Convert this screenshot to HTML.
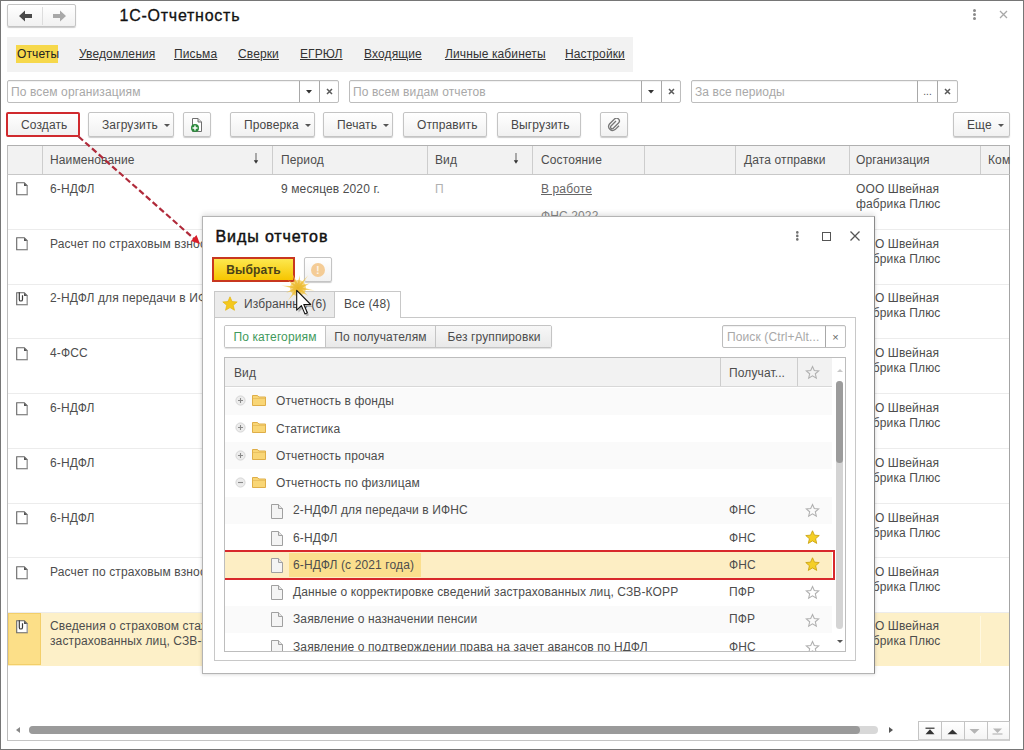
<!DOCTYPE html>
<html><head><meta charset="utf-8">
<style>
*{box-sizing:border-box}
html,body{margin:0;padding:0;width:1024px;height:750px;overflow:hidden;background:#fff}
body{position:relative;font-family:"Liberation Sans",sans-serif;font-size:12px;letter-spacing:0.12px;color:#4d4d4d}
.a{position:absolute}
.t{position:absolute;white-space:nowrap;line-height:16px}
.frame{left:0;top:0;width:1024px;height:750px;border:1px solid #767676;z-index:50;pointer-events:none}
.btn{position:absolute;border:1px solid #c4c4c4;border-radius:2px;background:linear-gradient(#fff,#f1f1f1);box-shadow:0 1px 1px rgba(0,0,0,.2);display:flex;align-items:center;justify-content:center;color:#474747;white-space:nowrap}
.tb{justify-content:flex-start;padding-left:13px}
.dd{display:inline-block;width:0;height:0;border-left:3px solid transparent;border-right:3px solid transparent;border-top:3px solid #555;margin-left:6px;margin-top:1px}
.inp{position:absolute;border:1px solid #bdbdbd;border-radius:2px;background:#fff;box-shadow:inset 0 1px 1px rgba(0,0,0,.06)}
.ph{position:absolute;left:3px;top:3px;color:#a8a8a8;line-height:16px;white-space:nowrap}
.ib{position:absolute;top:0;bottom:0;border-left:1px solid #a8a8a8;display:flex;align-items:center;justify-content:center;color:#666}
.nav u{text-decoration:underline}
.hdr{position:absolute;left:7px;top:145px;width:1003px;height:30px;background:#f2f2f2;border-top:1px solid #b0b0b0;border-bottom:1px solid #c8c8c8;border-left:1px solid #bcbcbc;border-right:1px solid #a4a4a4}
.vs{position:absolute;width:1px;background:#cdcdcd}
.row{position:absolute;left:8px;width:1001px;border-bottom:1px solid #ececec}
.doc{position:absolute;width:11px;height:14px}
</style></head><body>
<div class="a frame"></div>

<!-- back/forward -->
<div class="btn" style="left:7px;top:4px;width:69px;height:23px;justify-content:flex-start">
  <div class="a" style="left:34px;top:2px;width:1px;height:18px;background:#ddd"></div>
  <svg class="a" style="left:10px;top:4px" width="16" height="14" viewBox="0 0 16 14"><path d="M1 7 L7 1.5 L7 5 L14 5 L14 9 L7 9 L7 12.5 Z" fill="#4a4a4a"/></svg>
  <svg class="a" style="left:43px;top:4px" width="16" height="14" viewBox="0 0 16 14"><path d="M15 7 L9 1.5 L9 5 L2 5 L2 9 L9 9 L9 12.5 Z" fill="#a8a8a8"/></svg>
</div>
<div class="t" style="left:119.5px;top:5px;font-size:16px;line-height:22px;letter-spacing:0.75px;-webkit-text-stroke:0.3px #111;color:#111">1С-Отчетность</div>
<div class="a" style="left:973px;top:9px;width:3px;height:3px;border-radius:50%;background:#8a8a8a"></div>
<div class="a" style="left:973px;top:13px;width:3px;height:3px;border-radius:50%;background:#8a8a8a"></div>
<div class="a" style="left:973px;top:17px;width:3px;height:3px;border-radius:50%;background:#8a8a8a"></div>
<svg class="a" style="left:999px;top:10px" width="9" height="9" viewBox="0 0 9 9"><path d="M1 1L8 8M8 1L1 8" stroke="#a8a8a8" stroke-width="1.3"/></svg>

<!-- nav bar -->
<div class="a nav" style="left:7px;top:37px;width:626px;height:35px;background:#f2f2f2"></div>
<div class="a" style="left:16px;top:45px;width:42px;height:18px;background:#f6d84b"></div>
<div class="t nav" style="left:17px;top:45.5px;color:#222">Отчеты</div>
<div class="t nav" style="left:79px;top:45.5px;color:#333"><u>Уведомления</u></div>
<div class="t nav" style="left:174px;top:45.5px;color:#333"><u>Письма</u></div>
<div class="t nav" style="left:238px;top:45.5px;color:#333"><u>Сверки</u></div>
<div class="t nav" style="left:300px;top:45.5px;color:#333"><u>ЕГРЮЛ</u></div>
<div class="t nav" style="left:364px;top:45.5px;color:#333"><u>Входящие</u></div>
<div class="t nav" style="left:445px;top:45.5px;color:#333"><u>Личные кабинеты</u></div>
<div class="t nav" style="left:565px;top:45.5px;color:#333"><u>Настройки</u></div>

<!-- filters -->
<div class="inp" style="left:7px;top:80px;width:332px;height:23px">
  <div class="ph">По всем организациям</div>
  <div class="ib" style="left:291px;width:20px;padding-right:1px"><svg width="6" height="4" viewBox="0 0 6 4"><path d="M0 0H6L3 3.5Z" fill="#333"/></svg></div>
  <div class="ib" style="left:311px;width:20px;padding-right:1px"><svg width="7" height="7" viewBox="0 0 7 7"><path d="M1 1L6 6M6 1L1 6" stroke="#5a5a5a" stroke-width="1.5"/></svg></div>
</div>
<div class="inp" style="left:349px;top:80px;width:332px;height:23px">
  <div class="ph">По всем видам отчетов</div>
  <div class="ib" style="left:291px;width:20px;padding-right:1px"><svg width="6" height="4" viewBox="0 0 6 4"><path d="M0 0H6L3 3.5Z" fill="#333"/></svg></div>
  <div class="ib" style="left:311px;width:20px;padding-right:1px"><svg width="7" height="7" viewBox="0 0 7 7"><path d="M1 1L6 6M6 1L1 6" stroke="#5a5a5a" stroke-width="1.5"/></svg></div>
</div>
<div class="inp" style="left:691px;top:80px;width:267px;height:23px">
  <div class="ph">За все периоды</div>
  <div class="ib" style="left:225px;width:20px;font-size:10px;align-items:flex-end;padding-bottom:5px;color:#555">...</div>
  <div class="ib" style="left:245px;width:20px"><svg width="7" height="7" viewBox="0 0 7 7"><path d="M1 1L6 6M6 1L1 6" stroke="#5a5a5a" stroke-width="1.5"/></svg></div>
</div>

<!-- toolbar -->
<div class="btn tb" style="left:6px;top:112px;width:74px;height:25px;border:2px solid #d02a2e;box-shadow:none;padding-left:13px">Создать</div>
<div class="btn tb" style="left:88px;top:112px;width:86px;height:25px">Загрузить<span class="dd"></span></div>
<div class="btn" style="left:183px;top:112px;width:28px;height:25px">
  <svg width="14" height="16" viewBox="0 0 14 16"><path d="M2.5 1.5h5.5l3.5 3.5v9.5H2.5z" fill="#fff" stroke="#6f6f6f"/><path d="M8 1.5V5h3.5" fill="#ddd" stroke="#6f6f6f"/><circle cx="5" cy="11" r="4" fill="#2c8a3c"/><path d="M5 8.5v5M2.5 11h5" stroke="#fff" stroke-width="1.4"/></svg>
</div>
<div class="btn tb" style="left:230px;top:112px;width:85px;height:25px">Проверка<span class="dd"></span></div>
<div class="btn tb" style="left:323px;top:112px;width:70px;height:25px">Печать<span class="dd"></span></div>
<div class="btn tb" style="left:403px;top:112px;width:84px;height:25px">Отправить</div>
<div class="btn tb" style="left:497px;top:112px;width:84px;height:25px">Выгрузить</div>
<div class="btn" style="left:600px;top:112px;width:28px;height:25px">
  <svg width="14" height="14" viewBox="0 0 14 14"><path d="M9 3L4 8a1.6 1.6 0 0 0 2.3 2.3L11.5 5a2.8 2.8 0 0 0-4-4L2.5 6a4 4 0 0 0 5.6 5.6L12 7.7" fill="none" stroke="#777" stroke-width="1.3"/></svg>
</div>
<div class="btn tb" style="left:953px;top:112px;width:57px;height:25px">Еще<span class="dd"></span></div>

<!-- main table -->
<div class="a" style="left:7px;top:145px;width:1003px;height:596px;border:1px solid #c4c4c4;border-left-color:#bcbcbc;border-right-color:#a4a4a4;border-top:0"></div>
<div class="hdr"></div>
<div class="vs" style="left:42px;top:146px;height:28px"></div>
<div class="vs" style="left:272px;top:146px;height:28px"></div>
<div class="vs" style="left:427px;top:146px;height:28px"></div>
<div class="vs" style="left:532px;top:146px;height:28px"></div>
<div class="vs" style="left:644px;top:146px;height:28px"></div>
<div class="vs" style="left:735px;top:146px;height:28px"></div>
<div class="vs" style="left:849px;top:146px;height:28px"></div>
<div class="vs" style="left:980px;top:146px;height:28px"></div>
<div class="t" style="left:50px;top:152px">Наименование</div>
<svg class="a" style="left:253px;top:152px" width="6" height="13" viewBox="0 0 6 13"><path d="M3 1V9" stroke="#777" stroke-width="1.2"/><path d="M0.8 8.3H5.2L3 11.8Z" fill="#333"/></svg>
<div class="t" style="left:281px;top:152px">Период</div>
<div class="t" style="left:435px;top:152px">Вид</div>
<svg class="a" style="left:513px;top:152px" width="6" height="13" viewBox="0 0 6 13"><path d="M3 1V9" stroke="#777" stroke-width="1.2"/><path d="M0.8 8.3H5.2L3 11.8Z" fill="#333"/></svg>
<div class="t" style="left:541px;top:152px">Состояние</div>
<div class="t" style="left:744px;top:152px">Дата отправки</div>
<div class="t" style="left:856px;top:152px">Организация</div>
<div class="t" style="left:988px;top:152px">Ком</div>

<div class="a" style="left:8px;top:228.78px;width:1001px;height:1px;background:#ececec"></div>
<svg class="a" style="left:15.5px;top:182.3px;overflow:visible" width="13" height="14" viewBox="0 0 13 14"><path d="M0.7 0.7H8.3L11.3 3.7V12.8H0.7Z" fill="#fff" stroke="#666" stroke-width="1.1"/><path d="M11.3 3.7V12.8" stroke="#aaa" stroke-width="1.1"/><path d="M8 0.8V4H11.2Z" fill="#555"/></svg>
<div class="t" style="left:50px;top:180.90px">6-НДФЛ</div>
<div class="t" style="left:856px;top:180.90px">ООО Швейная</div>
<div class="t" style="left:856px;top:195.90px">фабрика Плюс</div>
<div class="t" style="left:281px;top:180.90px">9 месяцев 2020 г.</div>
<div class="t" style="left:435px;top:180.90px;color:#b0b0b0">П</div>
<div class="t" style="left:541px;top:180.90px;color:#666"><u>В работе</u></div>
<div class="t" style="left:541px;top:207.90px;color:#888">ФНС 2022</div>
<div class="a" style="left:8px;top:283.56px;width:1001px;height:1px;background:#ececec"></div>
<svg class="a" style="left:15.5px;top:237.3px;overflow:visible" width="13" height="14" viewBox="0 0 13 14"><path d="M0.7 0.7H8.3L11.3 3.7V12.8H0.7Z" fill="#fff" stroke="#666" stroke-width="1.1"/><path d="M11.3 3.7V12.8" stroke="#aaa" stroke-width="1.1"/><path d="M8 0.8V4H11.2Z" fill="#555"/></svg>
<div class="t" style="left:50px;top:235.68px">Расчет по страховым взносам</div>
<div class="t" style="left:856px;top:235.68px">ООО Швейная</div>
<div class="t" style="left:856px;top:250.68px">фабрика Плюс</div>
<div class="a" style="left:8px;top:338.34px;width:1001px;height:1px;background:#ececec"></div>
<svg class="a" style="left:15.5px;top:292.3px;overflow:visible" width="13" height="14" viewBox="0 0 13 14"><path d="M0.7 0.7H8.3L11.3 3.7V12.8H0.7Z" fill="#fff" stroke="#666" stroke-width="1.1"/><path d="M11.3 3.7V12.8" stroke="#aaa" stroke-width="1.1"/><path d="M8 0.8V4H11.2Z" fill="#555"/><path d="M3.3 0.3V7.4A1.6 1.6 0 0 0 6.5 7.4V3.2" fill="none" stroke="#3a3a3a" stroke-width="1.2"/></svg>
<div class="t" style="left:50px;top:290.46px">2-НДФЛ для передачи в ИФНС</div>
<div class="t" style="left:856px;top:290.46px">ООО Швейная</div>
<div class="t" style="left:856px;top:305.46px">фабрика Плюс</div>
<div class="a" style="left:8px;top:393.12px;width:1001px;height:1px;background:#ececec"></div>
<svg class="a" style="left:15.5px;top:347.3px;overflow:visible" width="13" height="14" viewBox="0 0 13 14"><path d="M0.7 0.7H8.3L11.3 3.7V12.8H0.7Z" fill="#fff" stroke="#666" stroke-width="1.1"/><path d="M11.3 3.7V12.8" stroke="#aaa" stroke-width="1.1"/><path d="M8 0.8V4H11.2Z" fill="#555"/></svg>
<div class="t" style="left:50px;top:345.24px">4-ФСС</div>
<div class="t" style="left:856px;top:345.24px">ООО Швейная</div>
<div class="t" style="left:856px;top:360.24px">фабрика Плюс</div>
<div class="a" style="left:8px;top:447.90px;width:1001px;height:1px;background:#ececec"></div>
<svg class="a" style="left:15.5px;top:402.3px;overflow:visible" width="13" height="14" viewBox="0 0 13 14"><path d="M0.7 0.7H8.3L11.3 3.7V12.8H0.7Z" fill="#fff" stroke="#666" stroke-width="1.1"/><path d="M11.3 3.7V12.8" stroke="#aaa" stroke-width="1.1"/><path d="M8 0.8V4H11.2Z" fill="#555"/></svg>
<div class="t" style="left:50px;top:400.02px">6-НДФЛ</div>
<div class="t" style="left:856px;top:400.02px">ООО Швейная</div>
<div class="t" style="left:856px;top:415.02px">фабрика Плюс</div>
<div class="a" style="left:8px;top:502.68px;width:1001px;height:1px;background:#ececec"></div>
<svg class="a" style="left:15.5px;top:456.3px;overflow:visible" width="13" height="14" viewBox="0 0 13 14"><path d="M0.7 0.7H8.3L11.3 3.7V12.8H0.7Z" fill="#fff" stroke="#666" stroke-width="1.1"/><path d="M11.3 3.7V12.8" stroke="#aaa" stroke-width="1.1"/><path d="M8 0.8V4H11.2Z" fill="#555"/></svg>
<div class="t" style="left:50px;top:454.80px">6-НДФЛ</div>
<div class="t" style="left:856px;top:454.80px">ООО Швейная</div>
<div class="t" style="left:856px;top:469.80px">фабрика Плюс</div>
<div class="a" style="left:8px;top:557.46px;width:1001px;height:1px;background:#ececec"></div>
<svg class="a" style="left:15.5px;top:511.3px;overflow:visible" width="13" height="14" viewBox="0 0 13 14"><path d="M0.7 0.7H8.3L11.3 3.7V12.8H0.7Z" fill="#fff" stroke="#666" stroke-width="1.1"/><path d="M11.3 3.7V12.8" stroke="#aaa" stroke-width="1.1"/><path d="M8 0.8V4H11.2Z" fill="#555"/></svg>
<div class="t" style="left:50px;top:509.58px">6-НДФЛ</div>
<div class="t" style="left:856px;top:509.58px">ООО Швейная</div>
<div class="t" style="left:856px;top:524.58px">фабрика Плюс</div>
<div class="a" style="left:8px;top:612.24px;width:1001px;height:1px;background:#ececec"></div>
<svg class="a" style="left:15.5px;top:566.3px;overflow:visible" width="13" height="14" viewBox="0 0 13 14"><path d="M0.7 0.7H8.3L11.3 3.7V12.8H0.7Z" fill="#fff" stroke="#666" stroke-width="1.1"/><path d="M11.3 3.7V12.8" stroke="#aaa" stroke-width="1.1"/><path d="M8 0.8V4H11.2Z" fill="#555"/></svg>
<div class="t" style="left:50px;top:564.36px">Расчет по страховым взносам</div>
<div class="t" style="left:856px;top:564.36px">ООО Швейная</div>
<div class="t" style="left:856px;top:579.36px">фабрика Плюс</div>
<div class="a" style="left:8px;top:612.74px;width:1001px;height:53px;background:#fdf0c8"></div>
<div class="a" style="left:8px;top:613.24px;width:33px;height:52px;background:#fcdf88;border:1px solid #f3cf6a"></div>
<div class="a" style="left:980px;top:615.74px;width:1px;height:47px;background:#fff8e0"></div>
<svg class="a" style="left:15.5px;top:620.3px;overflow:visible" width="13" height="14" viewBox="0 0 13 14"><path d="M0.7 0.7H8.3L11.3 3.7V12.8H0.7Z" fill="#fff" stroke="#666" stroke-width="1.1"/><path d="M11.3 3.7V12.8" stroke="#aaa" stroke-width="1.1"/><path d="M8 0.8V4H11.2Z" fill="#555"/><path d="M3.3 0.3V7.4A1.6 1.6 0 0 0 6.5 7.4V3.2" fill="none" stroke="#3a3a3a" stroke-width="1.2"/></svg>
<div class="t" style="left:50px;top:618.14px">Сведения о страховом стаже</div>
<div class="t" style="left:50px;top:633.14px">застрахованных лиц, СЗВ-СТАЖ</div>
<div class="t" style="left:856px;top:618.14px">ООО Швейная</div>
<div class="t" style="left:856px;top:633.14px">фабрика Плюс</div>

<!-- bottom scrollbar -->
<div class="a" style="left:29px;top:726px;width:849px;height:8px;border-radius:4px;background:#d8d8d8"></div>
<div class="a" style="left:29px;top:726px;width:831px;height:8px;border-radius:4px;background:#9a9a9a"></div>
<div class="a" style="left:16px;top:727px;width:0;height:0;border-top:3px solid transparent;border-bottom:3px solid transparent;border-right:4px solid #888"></div>
<div class="a" style="left:889px;top:727px;width:0;height:0;border-top:3px solid transparent;border-bottom:3px solid transparent;border-left:4px solid #555"></div>
<div class="a" style="left:918px;top:721px;width:92px;height:20px;border:1px solid #c4c4c4;border-bottom:2px solid #cfcfcf;background:linear-gradient(#fff,#f4f4f4)"></div>
<div class="a" style="left:941px;top:722px;width:1px;height:18px;background:#c4c4c4"></div>
<div class="a" style="left:964px;top:722px;width:1px;height:18px;background:#c4c4c4"></div>
<div class="a" style="left:987px;top:722px;width:1px;height:18px;background:#c4c4c4"></div>
<svg class="a" style="left:918px;top:721px" width="92" height="20" viewBox="0 0 92 20">
<path d="M7.5 7.2H16.5" stroke="#333" stroke-width="1.2"/><path d="M12 8.3L16.5 13.2H7.5Z" fill="#333"/>
<path d="M34.5 8.5L39.5 13.2H29.5Z" fill="#333"/>
<path d="M51.5 8H61.5L56.5 12.8Z" fill="#b4b4b4"/>
<path d="M75 7.5H84L79.5 12Z" fill="#b8b8b8"/><path d="M74.5 13H84.5" stroke="#b8b8b8" stroke-width="1.2"/>
</svg>

<!-- dialog -->
<div class="a" style="left:202px;top:216px;width:673px;height:458px;background:#fff;border:1px solid #b4b4b4;border-right-color:#8a8a8a;box-shadow:0 -3px 5px rgba(0,0,0,.09),0 1px 3px rgba(0,0,0,.12)"></div>
<div class="t" style="left:215.5px;top:226.5px;font-size:16px;line-height:20px;letter-spacing:0.9px;-webkit-text-stroke:0.45px #111;color:#111">Виды отчетов</div>
<svg class="a" style="left:794px;top:229px" width="7" height="14" viewBox="0 0 7 14"><circle cx="3.3" cy="3.4" r="1.3" fill="#707070"/><circle cx="3.3" cy="6.9" r="1.3" fill="#707070"/><circle cx="3.3" cy="10.4" r="1.3" fill="#707070"/></svg>
<div class="a" style="left:822px;top:232px;width:9px;height:9px;border:1.3px solid #555"></div>
<svg class="a" style="left:849px;top:230px" width="12" height="12" viewBox="0 0 12 12"><path d="M1.5 1.5L10.5 10.5M10.5 1.5L1.5 10.5" stroke="#555" stroke-width="1.3"/></svg>
<div class="a" style="left:212px;top:257px;width:83px;height:25px;border:2px solid #c8371f;background:linear-gradient(#fde84e,#f6c500);display:flex;align-items:center;justify-content:center;font-weight:bold;font-size:12px;color:#4a4218">Выбрать</div>
<div class="btn" style="left:304px;top:257px;width:28px;height:25px"><div style="width:14px;height:14px;border-radius:50%;background:#f4cc96;color:#fdf3e6;font-weight:bold;font-size:11px;line-height:14px;text-align:center">!</div></div>
<div class="a" style="left:214px;top:317px;width:642px;height:344px;border:1px solid #c8c8c8"></div>
<div class="a" style="left:214px;top:291px;width:121px;height:27px;background:#ebebeb;border:1px solid #c8c8c8;border-bottom:1px solid #c8c8c8"></div>
<div class="a" style="left:334px;top:291px;width:67px;height:27px;background:#fff;border:1px solid #c8c8c8;border-bottom:0"></div>
<svg class="a" style="left:222px;top:296px" width="16" height="16" viewBox="0 0 16 16"><path d="M8 0.8L10.1 5.5L15.2 5.9L11.3 9.3L12.5 14.3L8 11.6L3.5 14.3L4.7 9.3L0.8 5.9L5.9 5.5Z" fill="#f4c81e" stroke="#e0b000" stroke-width="0.6"/></svg>
<div class="t" style="left:244px;top:296px;color:#4a4a4a">Избранные (6)</div>
<div class="t" style="left:344px;top:296px;color:#4a4a4a">Все (48)</div>
<div class="a" style="left:224px;top:325px;width:328px;height:23px;border:1px solid #c4c4c4;border-radius:2px;box-shadow:0 1px 1px rgba(0,0,0,.12);overflow:hidden"><div class="a" style="left:0;top:0;width:100px;height:21px;background:#fff;color:#3f9a5c;display:flex;align-items:center;justify-content:center">По категориям</div><div class="a" style="left:100px;top:0;width:110px;height:21px;background:linear-gradient(#f7f7f7,#e9e9e9);border-left:1px solid #c4c4c4;display:flex;align-items:center;justify-content:center">По получателям</div><div class="a" style="left:210px;top:0;width:117px;height:21px;background:linear-gradient(#f7f7f7,#e9e9e9);border-left:1px solid #c4c4c4;display:flex;align-items:center;justify-content:center">Без группировки</div></div>
<div class="inp" style="left:722px;top:325px;width:124px;height:23px"><div class="ph" style="left:4px">Поиск (Ctrl+Alt...</div><div class="ib" style="left:102px;width:20px;font-size:11px">&#215;</div></div>
<div class="a" style="left:224px;top:357px;width:622px;height:295px;border:1px solid #bdbdbd;overflow:hidden" id="it">
<div class="a" style="left:0;top:0;width:607px;height:29px;background:#f2f2f2;border-bottom:1px solid #d8d8d8"></div>
<div class="vs" style="left:495px;top:0;height:28px"></div>
<div class="vs" style="left:572px;top:0;height:28px"></div>
<div class="t" style="left:9px;top:7px">Вид</div>
<div class="t" style="left:504px;top:7px">Получат...</div>
<svg class="a" style="left:580px;top:7px" width="15" height="15" viewBox="0 0 16 16"><path d="M8 1.6L9.9 5.9L14.6 6.3L11 9.4L12.1 14L8 11.6L3.9 14L5 9.4L1.4 6.3L6.1 5.9Z" fill="none" stroke="#b0b0b0" stroke-width="1.15"/></svg>
<div class="a" style="left:0;top:29.50px;width:607px;height:27.75px;background:#fafafa"></div>
<svg class="a" style="left:10px;top:37.1px" width="11" height="11" viewBox="0 0 11 11"><circle cx="5.5" cy="5.5" r="4.6" fill="#ececec" stroke="#d6d6d6"/><path d="M3 5.5H8M5.5 3V8" stroke="#8a8a8a" stroke-width="1.1"/></svg>
<svg class="a" style="left:27px;top:35.8px" width="15" height="13" viewBox="0 0 15 13"><path d="M0.5 1.5H5.5L6.8 3H13.5V11.5H0.5Z" fill="#f9d676" stroke="#dfae48"/><path d="M0.8 4.5H13.2" stroke="#e6bb5a" stroke-width="0.8"/></svg>
<div class="t" style="left:51px;top:35.30px">Отчетность в фонды</div>
<div class="a" style="left:0;top:56.75px;width:607px;height:27.75px;background:#fff"></div>
<svg class="a" style="left:10px;top:64.3px" width="11" height="11" viewBox="0 0 11 11"><circle cx="5.5" cy="5.5" r="4.6" fill="#ececec" stroke="#d6d6d6"/><path d="M3 5.5H8M5.5 3V8" stroke="#8a8a8a" stroke-width="1.1"/></svg>
<svg class="a" style="left:27px;top:63.0px" width="15" height="13" viewBox="0 0 15 13"><path d="M0.5 1.5H5.5L6.8 3H13.5V11.5H0.5Z" fill="#f9d676" stroke="#dfae48"/><path d="M0.8 4.5H13.2" stroke="#e6bb5a" stroke-width="0.8"/></svg>
<div class="t" style="left:51px;top:62.55px">Статистика</div>
<div class="a" style="left:0;top:84.00px;width:607px;height:27.75px;background:#fafafa"></div>
<svg class="a" style="left:10px;top:91.6px" width="11" height="11" viewBox="0 0 11 11"><circle cx="5.5" cy="5.5" r="4.6" fill="#ececec" stroke="#d6d6d6"/><path d="M3 5.5H8M5.5 3V8" stroke="#8a8a8a" stroke-width="1.1"/></svg>
<svg class="a" style="left:27px;top:90.3px" width="15" height="13" viewBox="0 0 15 13"><path d="M0.5 1.5H5.5L6.8 3H13.5V11.5H0.5Z" fill="#f9d676" stroke="#dfae48"/><path d="M0.8 4.5H13.2" stroke="#e6bb5a" stroke-width="0.8"/></svg>
<div class="t" style="left:51px;top:89.80px">Отчетность прочая</div>
<div class="a" style="left:0;top:111.25px;width:607px;height:27.75px;background:#fff"></div>
<svg class="a" style="left:10px;top:118.8px" width="11" height="11" viewBox="0 0 11 11"><circle cx="5.5" cy="5.5" r="4.6" fill="#ececec" stroke="#d6d6d6"/><path d="M3 5.5H8" stroke="#8a8a8a" stroke-width="1.1"/></svg>
<svg class="a" style="left:27px;top:117.5px" width="15" height="13" viewBox="0 0 15 13"><path d="M0.5 1.5H5.5L6.8 3H13.5V11.5H0.5Z" fill="#f9d676" stroke="#dfae48"/><path d="M0.8 4.5H13.2" stroke="#e6bb5a" stroke-width="0.8"/></svg>
<div class="t" style="left:51px;top:117.05px">Отчетность по физлицам</div>
<div class="a" style="left:0;top:138.50px;width:607px;height:27.75px;background:#fafafa"></div>
<svg class="a" style="left:46px;top:146px" width="12" height="15" viewBox="0 0 12 15"><path d="M0.5 0.5H7.5L11.5 4.5V14.5H0.5Z" fill="#f4f4f4" stroke="#a0a0a0"/><path d="M7.5 0.5V4.5H11.5" fill="#e6e6e6" stroke="#a0a0a0"/></svg>
<div class="t" style="left:68px;top:144.30px">2-НДФЛ для передачи в ИФНС</div>
<div class="t" style="left:504px;top:144.30px">ФНС</div>
<svg class="a" style="left:580px;top:145px" width="15" height="15" viewBox="0 0 16 16"><path d="M8 1.6L9.9 5.9L14.6 6.3L11 9.4L12.1 14L8 11.6L3.9 14L5 9.4L1.4 6.3L6.1 5.9Z" fill="none" stroke="#b0b0b0" stroke-width="1.15"/></svg>
<div class="a" style="left:0;top:165.75px;width:607px;height:27.75px;background:#fff"></div>
<svg class="a" style="left:46px;top:173px" width="12" height="15" viewBox="0 0 12 15"><path d="M0.5 0.5H7.5L11.5 4.5V14.5H0.5Z" fill="#f4f4f4" stroke="#a0a0a0"/><path d="M7.5 0.5V4.5H11.5" fill="#e6e6e6" stroke="#a0a0a0"/></svg>
<div class="t" style="left:68px;top:171.55px">6-НДФЛ</div>
<div class="t" style="left:504px;top:171.55px">ФНС</div>
<svg class="a" style="left:580px;top:172px" width="15" height="15" viewBox="0 0 16 16"><path d="M8 0.8L10.1 5.5L15.2 5.9L11.3 9.3L12.5 14.3L8 11.6L3.5 14.3L4.7 9.3L0.8 5.9L5.9 5.5Z" fill="#f5cf26" stroke="#c9a10f" stroke-width="0.9"/></svg>
<div class="a" style="left:0;top:193.00px;width:607px;height:27.75px;background:#fdeec4"></div>
<div class="a" style="left:64px;top:195.20px;width:132px;height:23.95px;background:#fbdf8e"></div>
<svg class="a" style="left:46px;top:200px" width="12" height="15" viewBox="0 0 12 15"><path d="M0.5 0.5H7.5L11.5 4.5V14.5H0.5Z" fill="#f4f4f4" stroke="#a0a0a0"/><path d="M7.5 0.5V4.5H11.5" fill="#e6e6e6" stroke="#a0a0a0"/></svg>
<div class="t" style="left:68px;top:198.80px">6-НДФЛ (с 2021 года)</div>
<div class="t" style="left:504px;top:198.80px">ФНС</div>
<svg class="a" style="left:580px;top:199px" width="15" height="15" viewBox="0 0 16 16"><path d="M8 0.8L10.1 5.5L15.2 5.9L11.3 9.3L12.5 14.3L8 11.6L3.5 14.3L4.7 9.3L0.8 5.9L5.9 5.5Z" fill="#f5cf26" stroke="#c9a10f" stroke-width="0.9"/></svg>
<div class="a" style="left:0;top:220.25px;width:607px;height:27.75px;background:#fff"></div>
<svg class="a" style="left:46px;top:227px" width="12" height="15" viewBox="0 0 12 15"><path d="M0.5 0.5H7.5L11.5 4.5V14.5H0.5Z" fill="#f4f4f4" stroke="#a0a0a0"/><path d="M7.5 0.5V4.5H11.5" fill="#e6e6e6" stroke="#a0a0a0"/></svg>
<div class="t" style="left:68px;top:226.05px">Данные о корректировке сведений застрахованных лиц, СЗВ-КОРР</div>
<div class="t" style="left:504px;top:226.05px">ПФР</div>
<svg class="a" style="left:580px;top:227px" width="15" height="15" viewBox="0 0 16 16"><path d="M8 1.6L9.9 5.9L14.6 6.3L11 9.4L12.1 14L8 11.6L3.9 14L5 9.4L1.4 6.3L6.1 5.9Z" fill="none" stroke="#b0b0b0" stroke-width="1.15"/></svg>
<div class="a" style="left:0;top:247.50px;width:607px;height:27.75px;background:#fafafa"></div>
<svg class="a" style="left:46px;top:254px" width="12" height="15" viewBox="0 0 12 15"><path d="M0.5 0.5H7.5L11.5 4.5V14.5H0.5Z" fill="#f4f4f4" stroke="#a0a0a0"/><path d="M7.5 0.5V4.5H11.5" fill="#e6e6e6" stroke="#a0a0a0"/></svg>
<div class="t" style="left:68px;top:253.30px">Заявление о назначении пенсии</div>
<div class="t" style="left:504px;top:253.30px">ПФР</div>
<svg class="a" style="left:580px;top:255px" width="15" height="15" viewBox="0 0 16 16"><path d="M8 1.6L9.9 5.9L14.6 6.3L11 9.4L12.1 14L8 11.6L3.9 14L5 9.4L1.4 6.3L6.1 5.9Z" fill="none" stroke="#b0b0b0" stroke-width="1.15"/></svg>
<div class="a" style="left:0;top:274.75px;width:607px;height:27.75px;background:#fff"></div>
<svg class="a" style="left:46px;top:282px" width="12" height="15" viewBox="0 0 12 15"><path d="M0.5 0.5H7.5L11.5 4.5V14.5H0.5Z" fill="#f4f4f4" stroke="#a0a0a0"/><path d="M7.5 0.5V4.5H11.5" fill="#e6e6e6" stroke="#a0a0a0"/></svg>
<div class="t" style="left:68px;top:280.55px">Заявление о подтверждении права на зачет авансов по НДФЛ</div>
<div class="t" style="left:504px;top:280.55px">ФНС</div>
<svg class="a" style="left:580px;top:282px" width="15" height="15" viewBox="0 0 16 16"><path d="M8 1.6L9.9 5.9L14.6 6.3L11 9.4L12.1 14L8 11.6L3.9 14L5 9.4L1.4 6.3L6.1 5.9Z" fill="none" stroke="#b0b0b0" stroke-width="1.15"/></svg>
<div class="a" style="left:-2px;top:191.70px;width:612px;height:30.05px;border:2px solid #d8282c;z-index:3"></div>
<div class="a" style="left:607px;top:0;width:15px;height:295px;background:#fff"></div>
<div class="a" style="left:612px;top:11px;width:0;height:0;border-left:3px solid transparent;border-right:3px solid transparent;border-bottom:3px solid #c8c8c8"></div>
<div class="a" style="left:611px;top:23px;width:7px;height:248px;border-radius:4px;background:#d4d4d4"></div>
<div class="a" style="left:611px;top:23px;width:7px;height:82px;border-radius:4px;background:#9c9c9c"></div>
<div class="a" style="left:612px;top:282px;width:0;height:0;border-left:3px solid transparent;border-right:3px solid transparent;border-top:3px solid #555"></div>
</div>
<svg class="a" style="left:273px;top:263px;z-index:5" width="50" height="50" viewBox="0 0 50 50"><defs><filter id="bl" x="-50%" y="-50%" width="200%" height="200%"><feGaussianBlur stdDeviation="0.7"/></filter><radialGradient id="rg"><stop offset="0" stop-color="#eab72a" stop-opacity="1"/><stop offset="0.45" stop-color="#efc13e" stop-opacity=".9"/><stop offset="1" stop-color="#f4cf68" stop-opacity=".45"/></radialGradient></defs><circle cx="25" cy="25" r="8" fill="#f0c446" opacity=".7" filter="url(#bl)"/><polygon points="41.8,27.5 29.1,26.8 35.2,33.1 27.7,28.6 31.2,40.8 25.5,29.5 23.1,37.9 23.2,29.1 14.4,38.3 21.4,27.7 12.9,29.7 20.5,25.5 8.2,22.5 20.9,23.2 14.8,16.9 22.3,21.4 18.8,9.2 24.5,20.5 26.9,12.1 26.8,20.9 35.6,11.7 28.6,22.3 37.1,20.3 29.5,24.5" fill="url(#rg)" filter="url(#bl)"/></svg>
<svg class="a" style="left:292px;top:287px;z-index:6" width="24" height="32" viewBox="0 0 24 32"><path d="M6.5 5.5L6.5 25.5L11 21L14.5 29.3L17 28.2L13.6 20H20.5Z" fill="rgba(0,0,0,.25)" filter="url(#bl)"/><path d="M4.7 3.3V23.2L9.4 18.6L12.9 26.9L15.3 25.8L11.8 17.5H18.7Z" fill="#fff" stroke="#111" stroke-width="1.1" stroke-linejoin="round"/></svg><svg class="a" style="left:0;top:0;z-index:40" width="1024" height="750" viewBox="0 0 1024 750"><path d="M78.5 136.5L196 240.5" stroke="#b02a3a" stroke-width="2.2" stroke-dasharray="6 3" fill="none"/><path d="M200 244L191 241L196.5 235Z" fill="#d81e2a"/></svg>

</body></html>
